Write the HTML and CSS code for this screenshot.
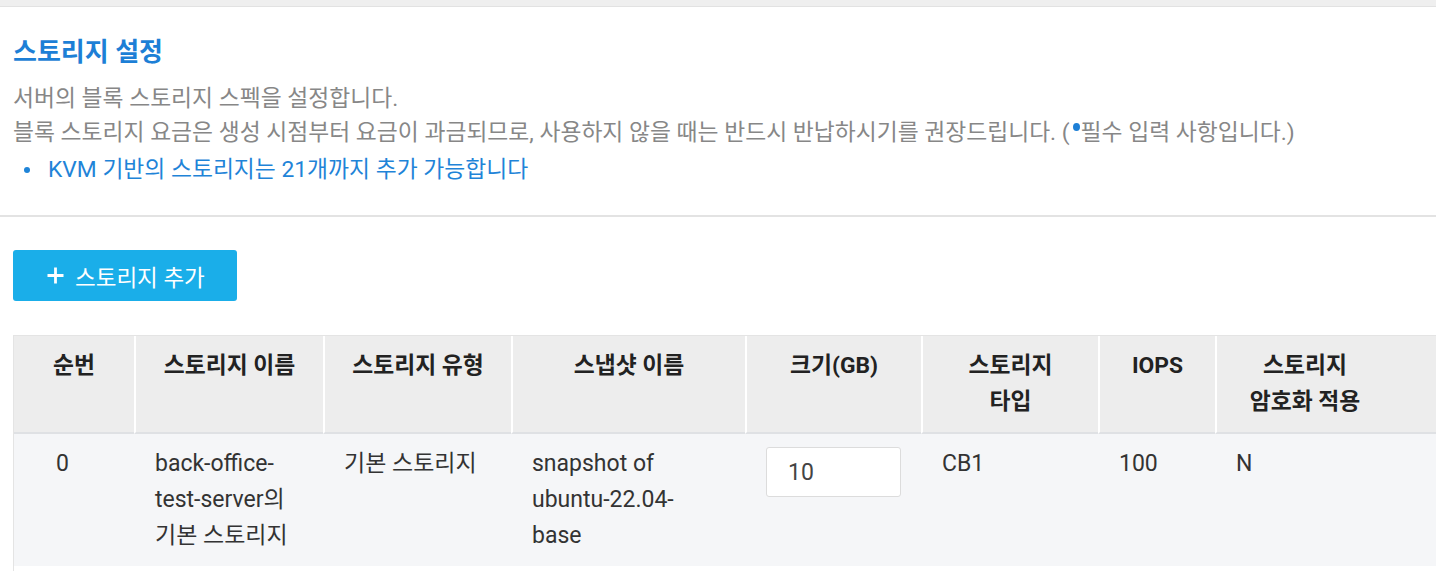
FILE: index.html
```html
<!DOCTYPE html>
<html lang="ko">
<head>
<meta charset="utf-8">
<title>스토리지 설정</title>
<link rel="stylesheet" href="styles.css">
</head>
<body>
<div class="topbar"></div>
<section class="intro">
  <h2 class="title">스토리지 설정</h2>
  <p class="desc">서버의 블록 스토리지 스펙을 설정합니다.</p>
  <p class="desc">블록 스토리지 요금은 생성 시점부터 요금이 과금되므로, 사용하지 않을 때는 반드시 반납하시기를 권장드립니다. (<span class="req-dot"></span>필수 입력 사항입니다.)</p>
  <ul class="notes">
    <li>KVM 기반의 스토리지는 21개까지 추가 가능합니다</li>
  </ul>
</section>
<div class="content">
  <button class="add-btn" type="button">
    <svg class="plus" width="17" height="17" viewBox="0 0 17 17" aria-hidden="true"><path d="M8.5 0.5V16.5M0.5 8.5H16.5" stroke="#fff" stroke-width="2.8" fill="none"/></svg>
    <span>스토리지 추가</span>
  </button>
  <div class="table-wrap">
    <table class="grid">
      <colgroup>
        <col class="c1"><col class="c2"><col class="c3"><col class="c4"><col class="c5"><col class="c6"><col class="c7"><col class="c8"><col class="c9">
      </colgroup>
      <thead>
        <tr>
          <th>순번</th>
          <th>스토리지 이름</th>
          <th>스토리지 유형</th>
          <th>스냅샷 이름</th>
          <th>크기(GB)</th>
          <th>스토리지<br>타입</th>
          <th>IOPS</th>
          <th>스토리지<br>암호화 적용</th>
          <th class="tail"></th>
        </tr>
      </thead>
      <tbody>
        <tr>
          <td class="seq">0</td>
          <td>back-office-test-server의 기본 스토리지</td>
          <td>기본 스토리지</td>
          <td class="snap">snapshot of ubuntu-22.04-base</td>
          <td><input class="size-input" type="text" value="10"></td>
          <td>CB1</td>
          <td>100</td>
          <td>N</td>
          <td></td>
        </tr>
      </tbody>
    </table>
  </div>
</div>
</body>
</html>
```

FILE: styles.css
```css
html, body {
  margin: 0;
  padding: 0;
  background: #fff;
  overflow: hidden;
}
body {
  font-family: Roboto, "Noto Sans CJK KR", "Noto Sans", sans-serif;
  color: #333;
}
.topbar {
  height: 6px;
  background: #efefef;
  border-bottom: 1px solid #e2e2e2;
}
.intro {
  padding: 28px 13px 28px;
  border-bottom: 2px solid #e3e3e3;
}
.title {
  margin: 0 0 13px;
  font-size: 26px;
  line-height: 34px;
  font-weight: 700;
  color: #1d7fd6;
}
.desc {
  margin: 0;
  font-size: 22.8px;
  line-height: 34px;
  color: #878787;
}
.req-dot {
  display: inline-block;
  width: 7px;
  height: 8px;
  border-radius: 50%;
  background: #1d7fd6;
  vertical-align: 9px;
  margin: 0 1px 0 3px;
}
.notes {
  list-style: none;
  margin: 3px 0 0;
  padding: 0;
  font-size: 22.8px;
  line-height: 34px;
  color: #1f84d8;
}
.notes li::before {
  content: "";
  display: inline-block;
  width: 6px;
  height: 6px;
  border-radius: 50%;
  background: #1f84d8;
  vertical-align: 4px;
  margin: 0 18px 0 11px;
}
.content {
  padding: 33px 0 0 13px;
}
.add-btn {
  display: inline-flex;
  align-items: center;
  gap: 11px;
  height: 51px;
  width: 224px;
  padding: 0 0 0 34px;
  border: 0;
  border-radius: 3px;
  background: #1aaee9;
  color: #fff;
  font-family: Roboto, "Noto Sans CJK KR", sans-serif;
  font-size: 22.5px;
  cursor: pointer;
}
.plus {
  flex: none;
}
.table-wrap {
  margin-top: 34px;
  overflow: hidden;
}
.grid {
  table-layout: fixed;
  border-collapse: separate;
  border-spacing: 0;
  width: 1580px;
  border-top: 1px solid #e4e4e4;
  border-left: 1px solid #e4e4e4;
}
.c1 { width: 120px; }
.c2 { width: 189px; }
.c3 { width: 188px; }
.c4 { width: 234px; }
.c5 { width: 176px; }
.c6 { width: 177px; }
.c7 { width: 117px; }
.c8 { width: 178px; }
.c9 { width: 200px; }
.grid th {
  background: #ededed;
  padding: 12px 4px 12px;
  height: 72px;
  vertical-align: top;
  text-align: center;
  font-size: 22.8px;
  line-height: 36px;
  font-weight: 700;
  color: #222;
  border-bottom: 2px solid #dfe1e4;
  border-left: 2px solid #fff;
}
.grid th:first-child {
  border-left: 0;
}
.grid th.tail {
  border-left: 0;
}
.grid td {
  background: #f5f6f8;
  padding: 12px 18px 12px 21px;
  vertical-align: top;
  font-size: 23px;
  line-height: 36px;
  color: #333;
  border-bottom: 5px solid #fff;
}
.grid td.seq {
  padding-left: 42px;
}
.grid td.snap {
  padding-right: 45px;
}
.size-input {
  box-sizing: border-box;
  display: block;
  width: 135px;
  height: 50px;
  margin-top: 1px;
  padding: 0 0 0 21px;
  border: 1px solid #dcdcdc;
  border-radius: 3px;
  background: #fff;
  font-family: Roboto, "Noto Sans CJK KR", sans-serif;
  font-size: 23px;
  color: #444;
  outline: none;
}
```
